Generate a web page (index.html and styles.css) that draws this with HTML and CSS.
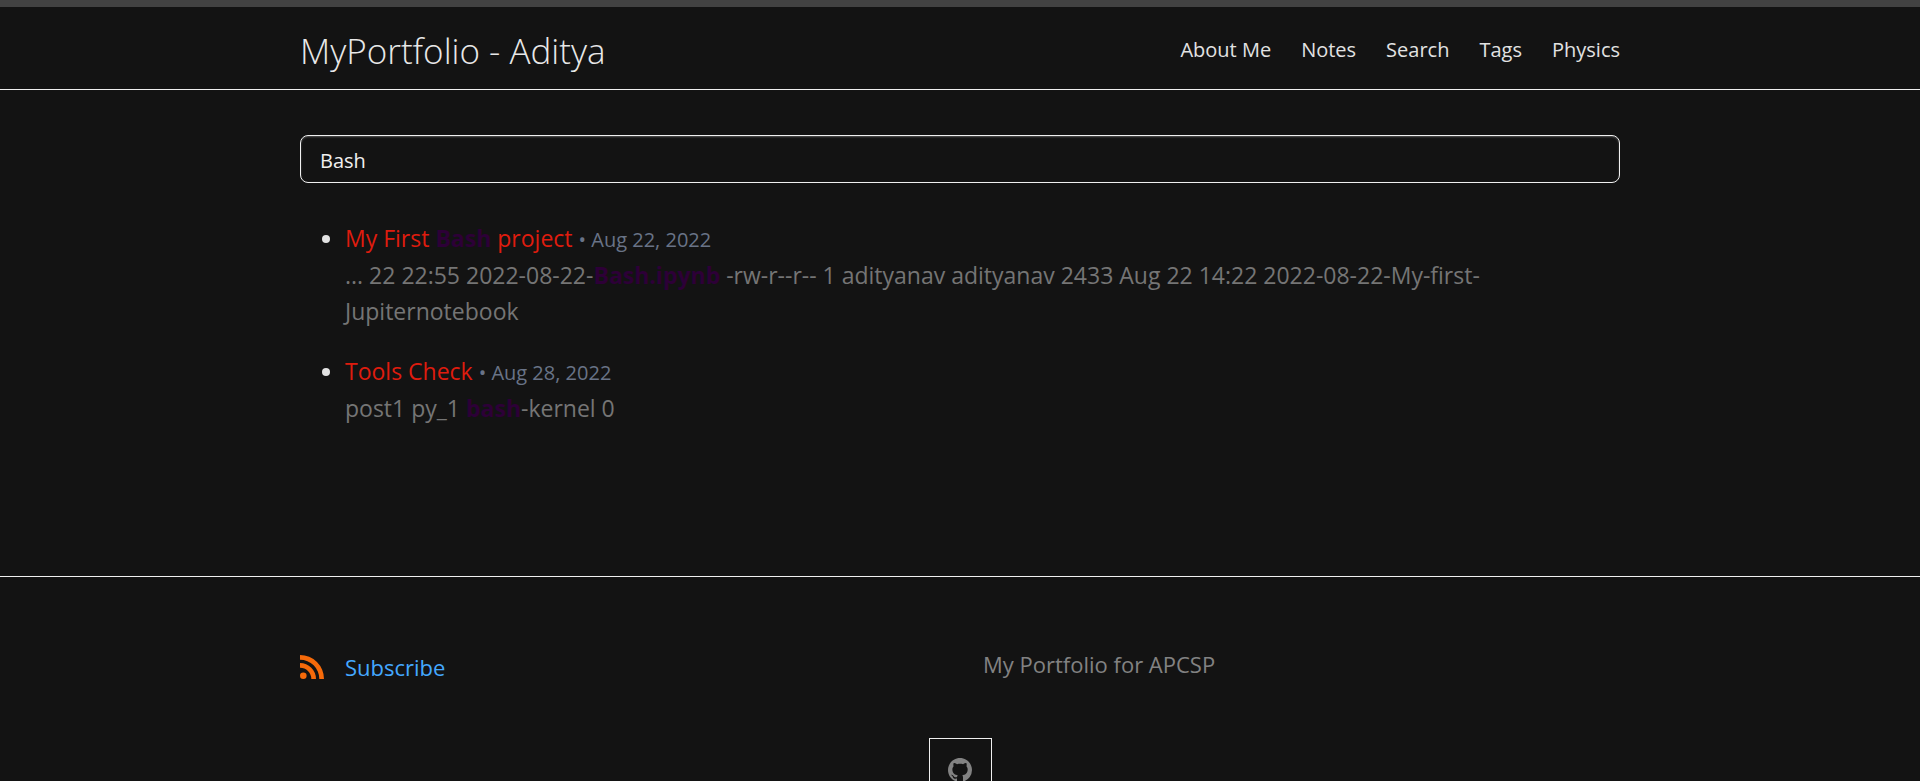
FILE: index.html
```html
<!DOCTYPE html>
<html lang="en">
<head>
<meta charset="utf-8">
<title>MyPortfolio - Aditya</title>
<link rel="stylesheet" href="styles.css">
</head>
<body>
<header class="site-header">
  <div class="wrapper header-row">
    <a class="site-title" href="#">MyPortfolio - Aditya</a>
    <nav class="site-nav">
      <a href="#">About Me</a>
      <a href="#">Notes</a>
      <a href="#">Search</a>
      <a href="#">Tags</a>
      <a href="#">Physics</a>
    </nav>
  </div>
</header>
<main class="wrapper page-content">
  <input class="search-input" type="text" value="Bash" aria-label="Search">
  <ul class="results">
    <li>
      <a class="result-title" href="#">My First <strong>Bash</strong> project</a> <span class="result-date">• Aug 22, 2022</span>
      <p class="result-text">... 22 22:55 2022-08-22-<strong>Bash.ipynb</strong> -rw-r--r-- 1 adityanav adityanav 2433 Aug 22 14:22 2022-08-22-My-first-Jupiternotebook</p>
    </li>
    <li>
      <a class="result-title" href="#">Tools Check</a> <span class="result-date">• Aug 28, 2022</span>
      <p class="result-text">post1 py_1 <strong>bash</strong>-kernel 0</p>
    </li>
  </ul>
</main>
<footer class="site-footer">
  <div class="wrapper">
    <div class="footer-cols">
      <a class="subscribe" href="#">
        <svg class="icon" viewBox="0 0 24 24" aria-hidden="true"><circle cx="3.3" cy="20.7" r="3.3"/><path d="M0 8v4.7A11.3 11.3 0 0 1 11.3 24H16A16 16 0 0 0 0 8z"/><path d="M0 0v4.7A19.3 19.3 0 0 1 19.3 24H24A24 24 0 0 0 0 0z"/></svg>
        <span>Subscribe</span>
      </a>
      <p class="description">My Portfolio for APCSP</p>
    </div>
    <div class="social">
      <a class="social-link" href="#" aria-label="GitHub">
        <svg class="icon" viewBox="0 0 16 16" aria-hidden="true"><path d="M8 0C3.58 0 0 3.58 0 8c0 3.54 2.29 6.53 5.47 7.59.4.07.55-.17.55-.38 0-.19-.01-.82-.01-1.49-2.01.37-2.53-.49-2.69-.94-.09-.23-.48-.94-.82-1.13-.28-.15-.68-.52-.01-.53.63-.01 1.08.58 1.23.82.72 1.21 1.87.87 2.33.66.07-.52.28-.87.51-1.07-1.78-.2-3.64-.89-3.64-3.95 0-.87.31-1.59.82-2.15-.08-.2-.36-1.02.08-2.12 0 0 .67-.21 2.2.82.64-.18 1.32-.27 2-.27s1.36.09 2 .27c1.53-1.04 2.2-.82 2.2-.82.44 1.1.16 1.92.08 2.12.51.56.82 1.27.82 2.15 0 3.07-1.87 3.75-3.65 3.95.29.25.54.73.54 1.48 0 1.07-.01 1.93-.01 2.2 0 .21.15.46.55.38A8.01 8.01 0 0 0 16 8c0-4.42-3.58-8-8-8z"/></svg>
      </a>
    </div>
  </div>
</footer>
</body>
</html>
```
FILE: styles.css
```css
* {
  box-sizing: border-box;
}

body {
  margin: 0;
  height: 100vh;
  overflow: hidden;
  background: #131313;
  color: #e2e2e2;
  font-family: "Segoe UI", "Open Sans", "Noto Sans", sans-serif;
  font-size: 23px;
  line-height: 36px;
}

a {
  text-decoration: none;
}

p {
  margin: 0;
}

.wrapper {
  max-width: 1400px;
  margin: 0 auto;
  padding: 0 40px;
}

.site-header {
  border-top: 7px solid #424242;
  border-bottom: 1px solid #f0f0f0;
}

.header-row {
  display: flex;
  justify-content: space-between;
  align-items: center;
  min-height: 82px;
}

.site-title {
  color: #e8e8e8;
  font-size: 35px;
  font-weight: 300;
  line-height: 48px;
  padding-top: 6px;
}

.site-nav {
  display: flex;
  gap: 30px;
  font-size: 20px;
  padding-top: 4px;
}

.site-nav a {
  color: #e2e2e2;
}

.page-content {
  padding-top: 45px;
  padding-bottom: 150px;
}

.search-input {
  display: block;
  width: 100%;
  height: 48px;
  padding: 2px 19px 0;
  border: 1px solid #f0f0f0;
  border-radius: 8px;
  background: #131313;
  box-shadow: inset 0 1px 2px #555;
  color: #f0f0f0;
  font: inherit;
  font-size: 20px;
}

.results {
  display: grid;
  gap: 24px;
  margin: 37px 0 0;
  padding-left: 45px;
}

.result-title {
  color: #df1c0e;
}

.result-title strong,
.result-text strong {
  color: #2d0037;
}

.result-date {
  color: #697387;
  font-size: 20px;
  line-height: 24px;
}

.result-text {
  padding-top: 1px;
  color: #757575;
}

.site-footer {
  border-top: 1px solid #f0f0f0;
  padding-top: 69px;
  color: #828282;
  font-size: 22px;
}

.footer-cols {
  display: grid;
  grid-template-columns: 683px 1fr;
}

.subscribe {
  display: flex;
  align-items: center;
  gap: 21px;
  padding-top: 3px;
  color: #44a8ff;
}

.icon {
  width: 24px;
  height: 24px;
  fill: currentColor;
}

.subscribe .icon {
  color: #f66a0a;
}

.social {
  display: flex;
  justify-content: center;
  padding-top: 53px;
}

.social-link {
  display: flex;
  align-items: center;
  justify-content: center;
  width: 63px;
  height: 63px;
  border: 1px solid #f0f0f0;
  color: #828282;
}
```
